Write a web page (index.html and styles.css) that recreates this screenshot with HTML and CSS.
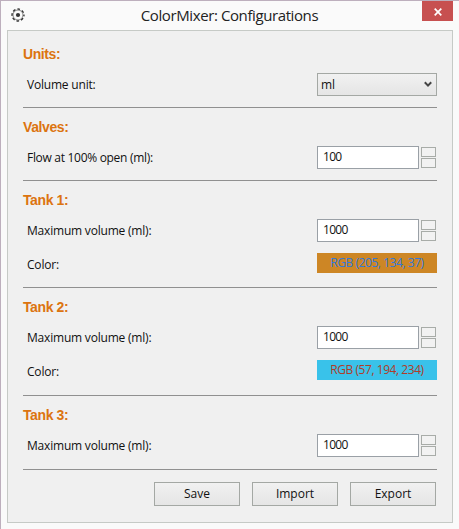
FILE: index.html
```html
<!DOCTYPE html>
<html lang="en">
<head>
<meta charset="utf-8">
<title>ColorMixer: Configurations</title>
<link rel="stylesheet" href="styles.css">
</head>
<body>
<div class="window">
  <header class="titlebar">
    <svg class="app-icon" viewBox="0 0 16 16" width="16" height="16">
      <circle cx="8" cy="8" r="5.9" fill="none" stroke="#333" stroke-width="1.5" stroke-dasharray="2.6 2.03" stroke-dashoffset="1.3"/>
      <circle cx="8" cy="8" r="5" fill="none" stroke="#777" stroke-width=".9"/>
      <circle cx="8" cy="8" r="2.1" fill="#333"/>
    </svg>
    <h1 class="title">ColorMixer: Configurations</h1>
    <button class="close" aria-label="Close">
      <svg viewBox="0 0 8 8" width="8" height="8"><path d="M.7.7l6.6 6.6M7.3.7L.7 7.3" stroke="#fff" stroke-width="1.7"/></svg>
    </button>
  </header>
  <main class="panel">
    <section class="group">
      <h2>Units:</h2>
      <div class="row"><span class="label">Volume unit:</span>
        <div class="select"><span>ml</span><svg viewBox="0 0 8 7" width="8" height="7"><path d="M.8 1.2L4 4.6l3.2-3.4" fill="none" stroke="#444" stroke-width="2"/></svg></div>
      </div>
    </section>
    <section class="group">
      <h2>Valves:</h2>
      <div class="row"><span class="label flow">Flow at 100% open (ml):</span>
        <div class="spinner"><span class="field">100</span><span class="steps"><i></i><i></i></span></div>
      </div>
    </section>
    <section class="group tall">
      <h2>Tank 1:</h2>
      <div class="row"><span class="label">Maximum volume (ml):</span>
        <div class="spinner"><span class="field">1000</span><span class="steps"><i></i><i></i></span></div>
      </div>
      <div class="row"><span class="label">Color:</span><div class="swatch orange">RGB (205, 134, 37)</div></div>
    </section>
    <section class="group taller">
      <h2>Tank 2:</h2>
      <div class="row"><span class="label">Maximum volume (ml):</span>
        <div class="spinner"><span class="field">1000</span><span class="steps"><i></i><i></i></span></div>
      </div>
      <div class="row"><span class="label">Color:</span><div class="swatch blue">RGB (57, 194, 234)</div></div>
    </section>
    <section class="group last">
      <h2>Tank 3:</h2>
      <div class="row"><span class="label">Maximum volume (ml):</span>
        <div class="spinner"><span class="field">1000</span><span class="steps"><i></i><i></i></span></div>
      </div>
    </section>
    <footer class="actions">
      <button>Save</button><button>Import</button><button>Export</button>
    </footer>
  </main>
</div>
</body>
</html>
```
FILE: styles.css
```css
* { box-sizing: border-box; }
body { margin: 0; overflow: hidden; font: 12px/16px "Open Sans", "Noto Sans", sans-serif; color: #111; }
.window { width: 459px; height: 529px; background: #fafafa; border: solid #bdafbd; border-width: 1px 0 0 1px; padding: 0 6px; }
.titlebar { display: flex; height: 29px; align-items: flex-start; }
.app-icon { margin: 6px 0 0 3px; }
.title { flex: 1; margin: 4px 0 0; padding-left: 11px; text-align: center; font-size: 15px; line-height: 20px; font-weight: 400; letter-spacing: -.4px; color: #222; white-space: nowrap; }
.close { width: 31px; height: 20px; padding: 2px 0 0; border: 0; background: #c75050; display: flex; align-items: center; justify-content: center; }
.panel { width: 446px; height: 493px; background: #f0f0f0; border: 1px solid #c6cac6; padding: 4px 15px 0; }
.group { width: 414px; height: 73px; border-bottom: 1px solid #909090; }
.tall { height: 107px; }
.taller { height: 108px; }
.last { height: 74px; }
h2 { margin: 0; height: 38px; padding-top: 11px; font: bold 14px/16px "Liberation Sans", Arial, sans-serif; letter-spacing: -.4px; color: #dc7410; }
.row { display: flex; justify-content: space-between; height: 23px; margin-bottom: 11px; padding-left: 4px; }
.label { line-height: 23px; letter-spacing: -.2px; white-space: nowrap; }
.flow { letter-spacing: -.3px; }
.select, .spinner, .swatch { width: 120px; flex: none; }
.select { display: flex; align-items: center; justify-content: space-between; border: 1px solid #a4a8a4; background: linear-gradient(#f1f1f1, #e5e5e5); padding: 0 4px 0 3px; }
.spinner { display: flex; gap: 2px; }
.field { width: 102px; height: 23px; border: 1px solid #9aa0a6; background: #fff; padding-left: 5px; line-height: 20px; letter-spacing: -.7px; }
.steps { display: flex; flex-direction: column; gap: 1px; padding-top: 1px; }
.steps i { width: 15px; height: 10px; border: 1px solid #a8aca8; background: #f2f2f2; }
.swatch { height: 20px; text-align: center; line-height: 20px; letter-spacing: -.45px; white-space: nowrap; }
.orange { background: #cd8625; color: #3279da; }
.blue { background: #39c2ea; color: #b03c28; }
.actions { display: flex; justify-content: flex-end; gap: 12px; padding: 12px 1px 0 0; }
.actions button { width: 86px; height: 24px; padding: 0; border: 1px solid #a4a8a4; background: linear-gradient(#f1f1f1, #e5e5e5); font: inherit; color: #111; }
```
